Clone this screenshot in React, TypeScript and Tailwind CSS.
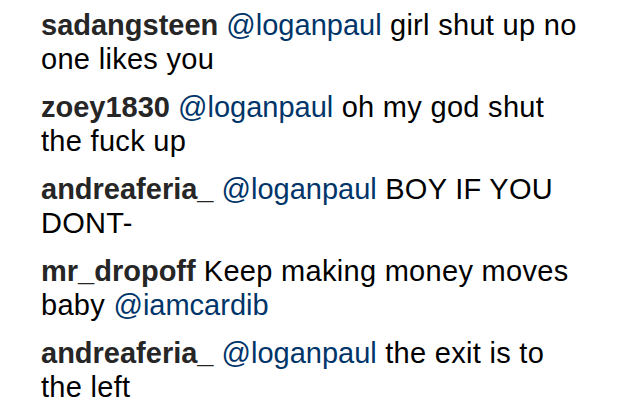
const comments = [
  { user: 'sadangsteen', lines: [[{ m: '@loganpaul' }, ' girl shut up no'], ['one likes you']] },
  { user: 'zoey1830', lines: [[{ m: '@loganpaul' }, ' oh my god shut'], ['the fuck up']] },
  { user: 'andreaferia_', lines: [[{ m: '@loganpaul' }, ' BOY IF YOU'], ['DONT-']] },
  { user: 'mr_dropoff', lines: [['Keep making money moves'], ['baby ', { m: '@iamcardib' }]] },
  { user: 'andreaferia_', lines: [[{ m: '@loganpaul' }, ' the exit is to'], ['the left']] },
] as { user: string; lines: (string | { m: string })[][] }[]

export default function App() {
  return (
    <div
      className="w-[625px] h-[418px] bg-white pl-[41px] pt-[8px] flex flex-col gap-[14px] overflow-hidden text-[29px] leading-[34px] text-black"
      style={{ fontFamily: '"Liberation Sans", Arial, sans-serif' }}
    >
      {comments.map((c, i) => (
        <div key={i}>
          {c.lines.map((line, j) => (
            <div key={j} className="whitespace-nowrap">
              {j === 0 && <span className="font-bold text-[#262626]">{c.user} </span>}
              {line.map((part, k) =>
                typeof part === 'string' ? (
                  <span key={k} className="tracking-[0.3px]">{part}</span>
                ) : (
                  <span key={k} className="text-[#003569]">{part.m}</span>
                )
              )}
            </div>
          ))}
        </div>
      ))}
    </div>
  )
}
